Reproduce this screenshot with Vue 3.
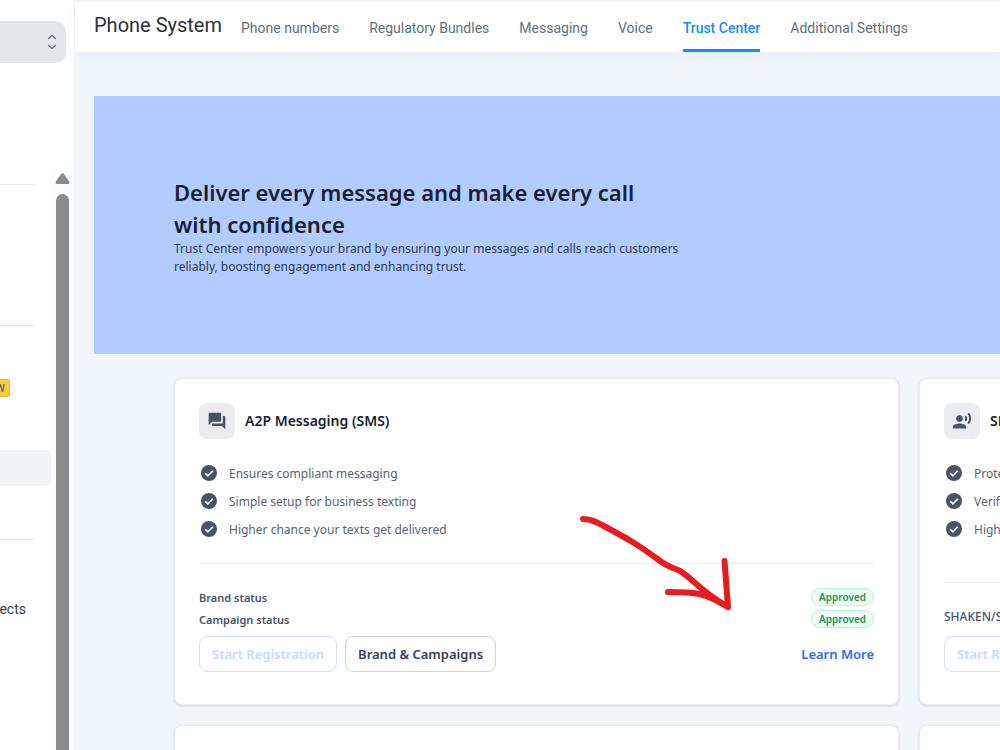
<script setup>
const tabs = [
  { label: 'Phone numbers' },
  { label: 'Regulatory Bundles' },
  { label: 'Messaging' },
  { label: 'Voice' },
  { label: 'Trust Center', active: true },
  { label: 'Additional Settings' },
]

const cards = [
  {
    id: 'a2p',
    title: 'A2P Messaging (SMS)',
    points: ['Ensures compliant messaging', 'Simple setup for business texting', 'Higher chance your texts get delivered'],
    statuses: [
      { label: 'Brand status', value: 'Approved' },
      { label: 'Campaign status', value: 'Approved' },
    ],
    manage: 'Brand & Campaigns',
  },
  {
    id: 'voice',
    title: 'SHAKEN/STIR',
    points: ['Protects', 'Verified', 'Higher'],
    statuses: [{ label: 'SHAKEN/STIR' }],
  },
]
</script>

<template>
  <div class="app">
    <aside class="sidebar">
      <button class="switcher" type="button" aria-label="Switch account">
        <svg width="10" height="16" viewBox="0 0 10 16" fill="none" stroke="#667085" stroke-width="1.4" stroke-linecap="round" stroke-linejoin="round">
          <path d="M1.5 4.5 5 1.5l3.5 3M1.5 11.5l3.5 3 3.5-3" />
        </svg>
      </button>
      <div class="side-body">
        <nav class="side-nav" aria-label="Main">
          <hr class="rule first" />
          <hr class="rule second" />
          <span class="new">New</span>
          <a class="current" href="#" aria-label="Current section"></a>
          <hr class="rule third" />
          <a class="side-link" href="#">Objects</a>
        </nav>
        <div class="scroll">
          <svg width="15" height="12" viewBox="0 0 15 12"><path d="M6.3.8Q7.5-.3 8.7.8l5.5 7.7q1 2.5-1.2 2.5H2Q-.2 11 .8 8.5z" fill="#8b8b8b" /></svg>
          <div class="thumb"></div>
        </div>
      </div>
    </aside>

    <main class="main">
      <header class="topbar">
        <h1>Phone System</h1>
        <nav class="tabs" aria-label="Phone system">
          <a v-for="t in tabs" :key="t.label" href="#" class="tab" :class="{ active: t.active }">{{ t.label }}</a>
        </nav>
      </header>

      <section class="hero">
        <div class="hero-text">
          <h2>Deliver every message and make every call with confidence</h2>
          <p>Trust Center empowers your brand by ensuring your messages and calls reach customers reliably, boosting engagement and enhancing trust.</p>
        </div>
      </section>

      <section class="cards">
        <article v-for="c in cards" :key="c.id" class="card">
          <div class="card-head">
            <span class="icon-box">
              <svg v-if="c.id === 'a2p'" width="20" height="20" viewBox="0 0 24 24" fill="#475467">
                <path d="M21 6h-2v9H6v2c0 .55.45 1 1 1h11l4 4V7c0-.55-.45-1-1-1zm-4 6V3c0-.55-.45-1-1-1H3c-.55 0-1 .45-1 1v14l4-4h10c.55 0 1-.45 1-1z" />
              </svg>
              <svg v-else width="20" height="20" viewBox="0 0 24 24" fill="#475467">
                <circle cx="9" cy="9" r="4" />
                <path d="M9 15c-2.67 0-8 1.34-8 4v2h16v-2c0-2.66-5.33-4-8-4zm7.760-9.640-1.680 1.690c.84 1.180.84 2.710 0 3.890l1.680 1.690c2.020-2.020 2.020-5.070 0-7.270zM20.070 2l-1.630 1.630c2.770 3.020 2.770 7.560 0 10.740L20.070 16c3.900-3.890 3.910-9.950 0-14z" />
              </svg>
            </span>
            <h3>{{ c.title }}</h3>
          </div>
          <ul>
            <li v-for="p in c.points" :key="p">
              <svg width="16" height="16" viewBox="0 0 16 16">
                <circle cx="8" cy="8" r="8" fill="#475467" />
                <path d="m4.200 8.200 2.700 2.700 5-5.200" fill="none" stroke="#fff" stroke-width="1.600" />
              </svg>
              {{ p }}
            </li>
          </ul>
          <footer>
            <dl :class="{ single: c.statuses.length === 1 }">
              <div v-for="s in c.statuses" :key="s.label" class="status">
                <dt>{{ s.label }}</dt>
                <dd v-if="s.value">{{ s.value }}</dd>
              </div>
            </dl>
            <div class="actions">
              <button type="button" class="btn" disabled>Start Registration</button>
              <button v-if="c.manage" type="button" class="btn">{{ c.manage }}</button>
              <a v-if="c.manage" href="#" class="learn">Learn More</a>
            </div>
          </footer>
        </article>
        <article class="card"></article>
        <article class="card"></article>
      </section>
    </main>

    <svg class="arrow" width="160" height="104" viewBox="578 511 160 104" fill="none" stroke="#e81c1e" stroke-width="6" stroke-linecap="round" stroke-linejoin="round">
      <path d="M583 519c7 0 12 2 19 6 26 14 35 19 54 33 13 10 14 8 24 13 11 6 20 20 48 36L724.500 561" />
      <path d="M668 592c30 0 37 1 60 15" />
    </svg>
  </div>
</template>

<style>
body {
  margin: 0;
  overflow: hidden;
}
</style>

<style scoped>
* {
  box-sizing: border-box;
}
.app {
  position: relative;
  display: flex;
  height: 100vh;
  overflow: hidden;
  background: #f0f6fa;
  font-family: "Noto Sans", "Open Sans", sans-serif;
  color: #18212f;
}
h1, h2, h3, p, ul, dl, dd, hr {
  margin: 0;
  padding: 0;
}
a {
  text-decoration: none;
}
.sidebar {
  flex: 0 0 75px;
  display: flex;
  flex-direction: column;
  padding-top: 21px;
  background: #fff;
  border-right: 1px solid #eef3f8;
  overflow: hidden;
}
.switcher {
  flex: none;
  width: 66px;
  height: 42px;
  padding: 0 9px 0 0;
  border: 0;
  border-radius: 0 10px 10px 0;
  background: #e5e6ea;
  display: flex;
  align-items: center;
  justify-content: flex-end;
}
.side-body {
  flex: 1;
  display: flex;
  min-height: 0;
  margin-top: 104px;
}
.side-nav {
  width: 51px;
  display: flex;
  flex-direction: column;
  align-items: flex-start;
}
.rule {
  width: 35px;
  height: 1px;
  flex: none;
  border: 0;
  background: #e4e6e9;
}
.first {
  margin-top: 17px;
}
.second {
  margin-top: 140px;
}
.new {
  width: 10px;
  height: 18px;
  margin-top: 53px;
  padding: 1px 4px 0 0;
  display: flex;
  justify-content: flex-end;
  align-items: center;
  border: 1px solid #d9b648;
  border-left: 0;
  border-radius: 0 3px 3px 0;
  background: #fdcb3f;
  color: #5f6570;
  font: 500 11px/16px Roboto, sans-serif;
  text-transform: uppercase;
}
.current {
  width: 51px;
  height: 36px;
  margin-top: 53px;
  border-radius: 0 5px 5px 0;
  background: #f2f3f6;
}
.third {
  margin-top: 53px;
}
.side-link {
  width: 26px;
  margin-top: 59px;
  display: flex;
  justify-content: flex-end;
  color: #3c3f43;
  font: 400 14px/20px Roboto, sans-serif;
}
.scroll {
  flex: 1;
  display: flex;
  flex-direction: column;
  align-items: center;
  padding-top: 6px;
  background: #fcfcfc;
}
.scroll svg {
  flex: none;
}
.thumb {
  flex: 1;
  width: 13px;
  margin-top: 9px;
  border-radius: 7px 7px 0 0;
  background: #8b8b8b;
}
.main {
  flex: 1;
  min-width: 0;
}
.topbar {
  display: flex;
  height: 52px;
  padding-left: 19px;
  border-top: 2px solid #f1f1f3;
  background: #fff;
  box-shadow: 0 4px 12px rgba(30, 60, 80, 0.04);
  font-family: Roboto, sans-serif;
  white-space: nowrap;
}
h1 {
  margin-right: 19px;
  font-size: 20px;
  font-weight: 400;
  line-height: 46px;
  color: #2a3135;
}
.tabs {
  display: flex;
  gap: 30px;
}
.tab {
  font-size: 14px;
  line-height: 52px;
  color: #607179;
}
.active {
  border-bottom: 3px solid #188bf6;
  font-weight: 500;
  color: #188bf6;
}
.hero {
  margin: 44px 0 24px 19px;
  height: 258px;
  padding: 80px 80px 0;
  background: #b2ccff;
}
.hero-text {
  max-width: 530px;
}
h2 {
  max-width: 480px;
  font-size: 22px;
  font-weight: 600;
  line-height: 32px;
}
.hero p {
  font-size: 12px;
  line-height: 18px;
  color: #2b3a50;
}
.cards {
  margin-left: 99px;
  display: grid;
  grid-template-columns: repeat(2, calc(100% - 101px));
  gap: 20px;
}
.card {
  display: flex;
  flex-direction: column;
  min-height: 327px;
  padding: 24px 24px 32px;
  border: 1px solid #e8ecf1;
  border-radius: 8px;
  background: #fff;
  box-shadow: 0 1px 3px rgba(16, 24, 40, 0.14);
  white-space: nowrap;
}
.card-head {
  display: flex;
  align-items: center;
  gap: 10px;
}
.icon-box {
  width: 36px;
  height: 36px;
  display: grid;
  place-items: center;
  border-radius: 8px;
  background: #eaecf0;
}
h3 {
  font-size: 14px;
  font-weight: 600;
  line-height: 20px;
}
ul {
  margin-top: 20px;
  list-style: none;
}
li {
  display: flex;
  align-items: center;
  gap: 12px;
  height: 28px;
  padding-left: 2px;
  font-size: 12px;
  color: #566275;
}
footer {
  margin-top: auto;
  padding-top: 22px;
  border-top: 1px solid #eceef1;
}
dl {
  margin-bottom: 6px;
}
.status {
  display: flex;
  align-items: center;
  justify-content: space-between;
  height: 22px;
  font-size: 11px;
  font-weight: 600;
  color: #475467;
}
.single {
  margin-bottom: 8px;
}
.single .status {
  height: 23px;
  font-size: 12px;
  font-weight: 500;
}
dd {
  height: 18px;
  padding: 0 7px;
  border: 1px solid #b9f3cf;
  border-radius: 9px;
  background: #ecfdf3;
  color: #2a8f50;
  font-size: 10px;
  line-height: 16px;
}
.actions {
  display: flex;
  align-items: center;
  gap: 8px;
}
.btn {
  height: 36px;
  padding: 0 12px;
  border: 1px solid #d0d5dd;
  border-radius: 8px;
  background: #fff;
  color: #344054;
  font: 600 13px/20px "Noto Sans", sans-serif;
}
.btn:disabled {
  border-color: #d1e0ff;
  color: #c6d8ff;
}
.learn {
  margin-left: auto;
  font-size: 13px;
  font-weight: 600;
  color: #2d6bf0;
}
.arrow {
  position: absolute;
  left: 578px;
  top: 511px;
}
</style>
